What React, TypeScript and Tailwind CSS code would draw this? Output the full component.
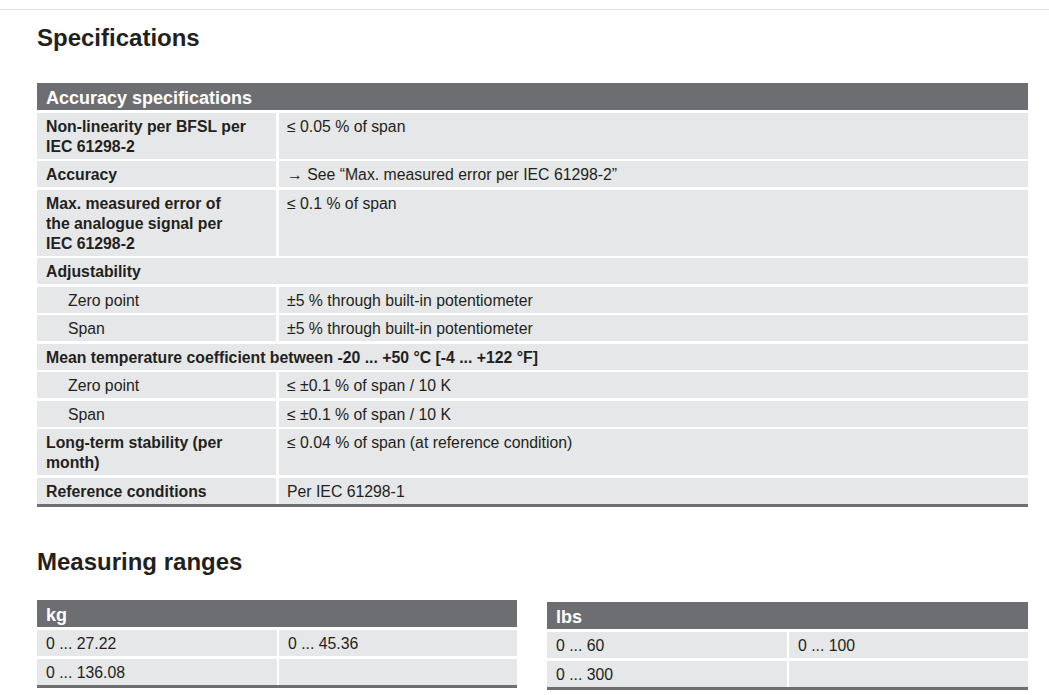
const font = { fontFamily: '"Liberation Sans", Arial, Helvetica, sans-serif' };

type Row =
  | { label: string; value: string; bold?: boolean; indent?: boolean }
  | { full: string };

const accuracyRows: Row[] = [
  { label: "Non-linearity per BFSL per\nIEC 61298-2", value: "≤ 0.05 % of span", bold: true },
  { label: "Accuracy", value: "→ See “Max. measured error per IEC 61298-2”", bold: true },
  { label: "Max. measured error of\nthe analogue signal per\nIEC 61298-2", value: "≤ 0.1 % of span", bold: true },
  { full: "Adjustability" },
  { label: "Zero point", value: "±5 % through built-in potentiometer", indent: true },
  { label: "Span", value: "±5 % through built-in potentiometer", indent: true },
  { full: "Mean temperature coefficient between -20 ... +50 °C [-4 ... +122 °F]" },
  { label: "Zero point", value: "≤ ±0.1 % of span / 10 K", indent: true },
  { label: "Span", value: "≤ ±0.1 % of span / 10 K", indent: true },
  { label: "Long-term stability (per\nmonth)", value: "≤ 0.04 % of span (at reference condition)", bold: true },
  { label: "Reference conditions", value: "Per IEC 61298-1", bold: true },
];

const SpecRow = ({ row }: { row: Row }) => {
  if ("full" in row) {
    return (
      <div className="bg-[#e6e7e8] pl-[9px] pt-[4px] pb-[2px] font-bold">{row.full}</div>
    );
  }
  return (
    <div className="grid grid-cols-[239px_1fr] gap-x-[3px]">
      <div
        className={`bg-[#e6e7e8] pt-[4px] pb-[2px] pr-2 whitespace-pre-line ${row.bold ? "font-bold" : ""} ${
          row.indent ? "pl-[31px]" : "pl-[9px]"
        }`}
      >
        {row.label}
      </div>
      <div className="bg-[#e6e7e8] pl-[8px] pt-[4px] pb-[2px]">{row.value}</div>
    </div>
  );
};

const RangeTable = ({ unit, cells, className = "" }: { unit: string; cells: string[]; className?: string }) => (
  <div className={`flex flex-col gap-[3px] border-b-[3px] border-[#6d6e71] ${className}`}>
    <div className="bg-[#6d6e71] text-white font-bold text-[18px] leading-[21px] pl-[9px] pt-[5px] pb-[1px]">
      {unit}
    </div>
    <div className="grid grid-cols-[240px_1fr] gap-x-[2px] gap-y-[3px]">
      {cells.map((c, i) => (
        <div key={i} className="bg-[#e6e7e8] pl-[9px] pt-[4px] pb-[2px] h-[26px]">
          {c}
        </div>
      ))}
    </div>
  </div>
);

export default function App() {
  return (
    <div className="min-h-screen bg-white text-[#231f20] text-[15.8px] leading-[20px]" style={font}>
      <div className="h-[10px] border-b border-[#e3e3e3]" />
      <div className="pl-[37px] pr-[21px]">
        <h1 className="mt-[14px] text-[24px] leading-[28px] font-bold">Specifications</h1>

        <div className="mt-[31px] flex flex-col gap-[2.5px] border-b-[3px] border-[#6d6e71]">
          <div className="bg-[#6d6e71] text-white font-bold text-[18px] leading-[21px] pl-[9px] pt-[5px] pb-[1px]">
            Accuracy specifications
          </div>
          {accuracyRows.map((r, i) => (
            <SpecRow key={i} row={r} />
          ))}
        </div>

        <h1 className="mt-[41px] text-[24px] leading-[28px] font-bold">Measuring ranges</h1>

        <div className="mt-[24px] flex gap-[30px] items-start">
          <RangeTable unit="kg" cells={["0 ... 27.22", "0 ... 45.36", "0 ... 136.08", ""]} className="w-[480px]" />
          <RangeTable unit="lbs" cells={["0 ... 60", "0 ... 100", "0 ... 300", ""]} className="w-[481px] mt-[2px]" />
        </div>
      </div>
    </div>
  );
}
